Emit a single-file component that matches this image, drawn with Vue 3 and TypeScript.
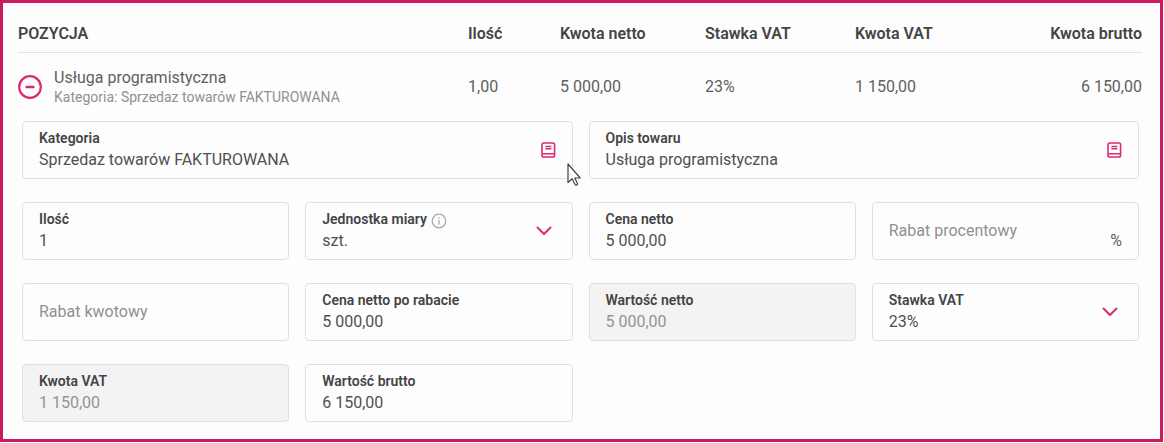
<script setup lang="ts">
import { ref } from 'vue'

interface Field {
  id: string
  label: string
  value: string
  kind: 'text' | 'select' | 'book'
  wide?: boolean
  disabled?: boolean
  info?: boolean
  suffix?: string
  pointer?: boolean
}

const expanded = ref(true)

const fields = ref<Field[]>([
  { id: 'kategoria', label: 'Kategoria', value: 'Sprzedaz towarów FAKTUROWANA', kind: 'book', wide: true, pointer: true },
  { id: 'opis', label: 'Opis towaru', value: 'Usługa programistyczna', kind: 'book', wide: true },
  { id: 'ilosc', label: 'Ilość', value: '1', kind: 'text' },
  { id: 'jednostka', label: 'Jednostka miary', value: 'szt.', kind: 'select', info: true },
  { id: 'cena-netto', label: 'Cena netto', value: '5 000,00', kind: 'text' },
  { id: 'rabat-procentowy', label: 'Rabat procentowy', value: '', kind: 'text', suffix: '%' },
  { id: 'rabat-kwotowy', label: 'Rabat kwotowy', value: '', kind: 'text' },
  { id: 'cena-po-rabacie', label: 'Cena netto po rabacie', value: '5 000,00', kind: 'text' },
  { id: 'wartosc-netto', label: 'Wartość netto', value: '5 000,00', kind: 'text', disabled: true },
  { id: 'stawka-vat', label: 'Stawka VAT', value: '23%', kind: 'select' },
  { id: 'kwota-vat', label: 'Kwota VAT', value: '1 150,00', kind: 'text', disabled: true },
  { id: 'wartosc-brutto', label: 'Wartość brutto', value: '6 150,00', kind: 'text' },
])

const isEmptyText = (f: Field): boolean => f.kind === 'text' && f.value === ''
</script>

<template>
  <main class="panel">
    <table class="items">
      <colgroup>
        <col />
        <col class="c-qty" />
        <col class="c-net" />
        <col class="c-rate" />
        <col class="c-vat" />
        <col class="c-gross" />
      </colgroup>
      <thead>
        <tr>
          <th scope="col">POZYCJA</th>
          <th scope="col">Ilość</th>
          <th scope="col">Kwota netto</th>
          <th scope="col">Stawka VAT</th>
          <th scope="col">Kwota VAT</th>
          <th scope="col" class="end">Kwota brutto</th>
        </tr>
      </thead>
      <tbody>
        <tr>
          <td>
            <div class="position">
              <button type="button" class="toggle" aria-label="Zwiń pozycję" :aria-expanded="expanded" @click="expanded = !expanded">
                <svg viewBox="0 0 24 24" width="24" height="24" fill="none" stroke="currentColor">
                  <circle cx="12" cy="12" r="10.8" stroke-width="2.2" />
                  <path d="M8.6 12h6.8" stroke-width="2.4" stroke-linecap="round" />
                </svg>
              </button>
              <div>
                <div class="name">Usługa programistyczna</div>
                <div class="category">Kategoria: Sprzedaz towarów FAKTUROWANA</div>
              </div>
            </div>
          </td>
          <td>1,00</td>
          <td>5 000,00</td>
          <td>23%</td>
          <td>1 150,00</td>
          <td class="end">6 150,00</td>
        </tr>
      </tbody>
    </table>

    <form v-if="expanded" class="fields" @submit.prevent>
      <div
        v-for="f in fields"
        :key="f.id"
        class="field"
        :class="{ wide: f.wide, disabled: f.disabled }"
      >
        <div class="body">
          <div v-if="!isEmptyText(f)" class="caption">
            <label :for="f.id">{{ f.label }}</label>
            <svg v-if="f.info" class="info" viewBox="0 0 16 16" width="16" height="16" fill="none" stroke="currentColor">
              <circle cx="8" cy="8" r="6.8" stroke-width="1.3" />
              <path d="M8 7v4.4M8 4.4v1.5" stroke-width="1.3" />
            </svg>
          </div>
          <select v-if="f.kind === 'select'" :id="f.id" v-model="f.value">
            <option :value="f.value">{{ f.value }}</option>
          </select>
          <input
            v-else
            :id="f.id"
            v-model="f.value"
            type="text"
            :disabled="f.disabled"
            :placeholder="f.label"
            :aria-label="isEmptyText(f) ? f.label : undefined"
          />
        </div>
        <svg v-if="f.kind === 'select'" class="chevron" viewBox="0 0 16 10" width="16" height="10" fill="none" stroke="currentColor">
          <path d="M1.5 1.5 8 8l6.5-6.5" stroke-width="2" stroke-linecap="round" stroke-linejoin="round" />
        </svg>
        <button v-if="f.kind === 'book'" type="button" class="book" :aria-label="`Wybierz: ${f.label}`">
          <svg viewBox="0 0 15 16" width="15" height="16" fill="none" stroke="currentColor">
            <rect x="1" y="1" width="12.6" height="14" rx="1.8" stroke-width="1.6" />
            <path d="M1.5 11.8h11.6" stroke-width="1.5" />
            <path d="M4.4 4.5h6M4.4 6.8h6" stroke-width="1.5" />
          </svg>
        </button>
        <span v-if="f.suffix" class="suffix">{{ f.suffix }}</span>
        <svg v-if="f.pointer" class="pointer" viewBox="0 0 14 24" width="14" height="24" aria-hidden="true">
          <path d="M1 1v18.5l4.2-3.8 3 6c.5.9 2.7 0 2.3-1.1l-2.7-5.6h5.4z" fill="#fff" stroke="#444" stroke-width="1.2" stroke-linejoin="round" />
        </svg>
      </div>
    </form>
  </main>
</template>

<style>
body {
  background: #fff;
}
</style>

<style scoped>
.panel {
  box-sizing: border-box;
  margin: 0 1px 1px 0;
  padding: 12px 18px 17px 15px;
  border: 3px solid #cb1b60;
  background: #fdfdfd;
  color: #606060;
  font-family: Roboto, "Liberation Sans", sans-serif;
  font-size: 16px;
  line-height: 20px;
}

.items {
  width: 100%;
  table-layout: fixed;
  border-collapse: collapse;
}

.c-qty { width: 92px; }
.c-net { width: 145px; }
.c-rate { width: 150px; }
.c-vat { width: 144px; }
.c-gross { width: 143px; }

th,
td {
  padding: 0;
  text-align: left;
  white-space: nowrap;
}

th {
  box-sizing: border-box;
  height: 37px;
  padding-top: 2px;
  border-bottom: 1px solid #e2e2e2;
  color: #444;
  font-weight: 600;
}

td {
  height: 68px;
}

.end {
  text-align: right;
}

.position {
  display: flex;
  align-items: center;
  gap: 12px;
}

button {
  display: flex;
  padding: 0;
  border: 0;
  background: none;
  color: #dc2a70;
  cursor: pointer;
}

.category {
  color: #909090;
  font-size: 14px;
  line-height: 18px;
}

.fields {
  display: grid;
  grid-template-columns: repeat(4, minmax(0, 1fr));
  gap: 23px 16px;
  margin: 0 3px 0 4px;
}

.field {
  position: relative;
  display: flex;
  align-items: center;
  box-sizing: border-box;
  min-height: 58px;
  padding: 4px 16px;
  border: 1px solid #e0e0e0;
  border-radius: 4px;
}

.wide {
  grid-column: span 2;
}

.disabled {
  background: #f3f3f3;
}

.body {
  flex: 1;
  min-width: 0;
}

.caption {
  display: flex;
  align-items: flex-end;
  gap: 4px;
  color: #444;
  font-size: 14px;
  font-weight: 600;
}

.info {
  color: #aaa;
}

input,
select {
  display: block;
  box-sizing: border-box;
  width: 100%;
  height: 24px;
  margin: 0;
  padding: 0;
  border: 0;
  outline: 0;
  background: none;
  color: #505050;
  font: inherit;
  line-height: 24px;
  appearance: none;
  opacity: 1;
}

input::placeholder {
  color: #909090;
  opacity: 1;
}

.disabled input {
  color: #949494;
}

.chevron {
  margin-right: 4px;
  color: #dc2a70;
}

.suffix {
  align-self: flex-end;
  padding-bottom: 4px;
  color: #606060;
}

.pointer {
  position: absolute;
  right: -9px;
  bottom: -9px;
}
</style>
